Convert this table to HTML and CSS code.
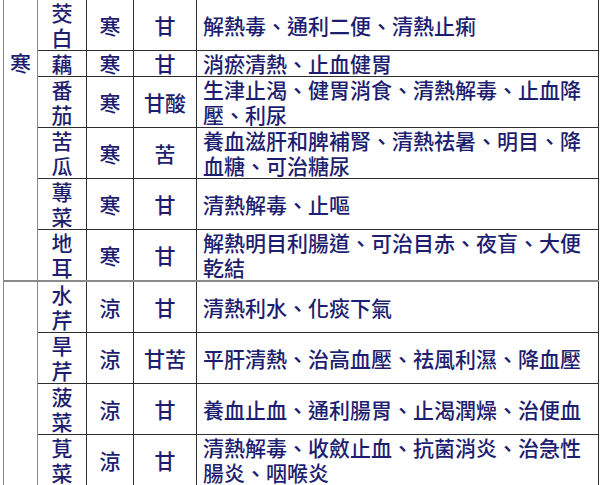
FILE: index.html
```html
<!DOCTYPE html>
<html lang="zh-Hant">
<head>
<meta charset="utf-8">
<title>蔬菜性味</title>
<link rel="stylesheet" href="styles.css">
</head>
<body>
<table class="herbs">
  <colgroup>
    <col class="c-cat">
    <col class="c-name">
    <col class="c-nature">
    <col class="c-taste">
    <col class="c-fn">
  </colgroup>
  <tbody>
    <tr>
      <td class="cat" rowspan="6">寒</td>
      <td>茭<br>白</td>
      <td>寒</td>
      <td>甘</td>
      <td class="fn">解熱毒、通利二便、清熱止痢</td>
    </tr>
    <tr>
      <td>藕</td>
      <td>寒</td>
      <td>甘</td>
      <td class="fn">消瘀清熱、止血健胃</td>
    </tr>
    <tr>
      <td>番<br>茄</td>
      <td>寒</td>
      <td>甘酸</td>
      <td class="fn">生津止渴、健胃消食、清熱解毒、止血降<br>壓、利尿</td>
    </tr>
    <tr>
      <td>苦<br>瓜</td>
      <td>寒</td>
      <td>苦</td>
      <td class="fn">養血滋肝和脾補腎、清熱祛暑、明目、降<br>血糖、可治糖尿</td>
    </tr>
    <tr>
      <td>蓴<br>菜</td>
      <td>寒</td>
      <td>甘</td>
      <td class="fn">清熱解毒、止嘔</td>
    </tr>
    <tr>
      <td>地<br>耳</td>
      <td>寒</td>
      <td>甘</td>
      <td class="fn">解熱明目利腸道、可治目赤、夜盲、大便<br>乾結</td>
    </tr>
    <tr class="split">
      <td class="cat" rowspan="5"></td>
      <td>水<br>芹</td>
      <td>涼</td>
      <td>甘</td>
      <td class="fn">清熱利水、化痰下氣</td>
    </tr>
    <tr>
      <td>旱<br>芹</td>
      <td>涼</td>
      <td>甘苦</td>
      <td class="fn">平肝清熱、治高血壓、祛風利濕、降血壓</td>
    </tr>
    <tr>
      <td>菠<br>菜</td>
      <td>涼</td>
      <td>甘</td>
      <td class="fn">養血止血、通利腸胃、止渴潤燥、治便血</td>
    </tr>
    <tr>
      <td>莧<br>菜</td>
      <td>涼</td>
      <td>甘</td>
      <td class="fn">清熱解毒、收斂止血、抗菌消炎、治急性<br>腸炎、咽喉炎</td>
    </tr>
    <tr>
      <td>&nbsp;<br>&nbsp;</td>
      <td>&nbsp;</td>
      <td>&nbsp;</td>
      <td class="fn">&nbsp;</td>
    </tr>
  </tbody>
</table>
</body>
</html>
```

FILE: styles.css
```css
html, body {
  margin: 0;
  padding: 0;
  background: #ffffff;
  overflow: hidden;
}

.herbs {
  border-collapse: collapse;
  table-layout: fixed;
  width: 595px;
  margin: -1px 0 0 3px;
  font-family: "Noto Sans CJK TC", "Noto Sans CJK SC", sans-serif;
  font-size: 21px;
  font-weight: 500;
  line-height: 25px;
  color: #1e1e70;
}

.c-cat { width: 34px; }
.c-name { width: 49px; }
.c-nature { width: 47px; }
.c-taste { width: 63px; }
.c-fn { width: 402px; }

.herbs td {
  border: 1px solid #2e2e2e;
  padding: 0;
  text-align: center;
  vertical-align: middle;
}

.herbs td.fn {
  text-align: left;
  padding-left: 6px;
  white-space: nowrap;
}

.herbs td.cat {
  border: 1px solid #8a8a8a;
  vertical-align: top;
  padding-top: 50px;
}

.herbs tr.split td {
  border-top: 2px solid #8a8a8a;
}
```
